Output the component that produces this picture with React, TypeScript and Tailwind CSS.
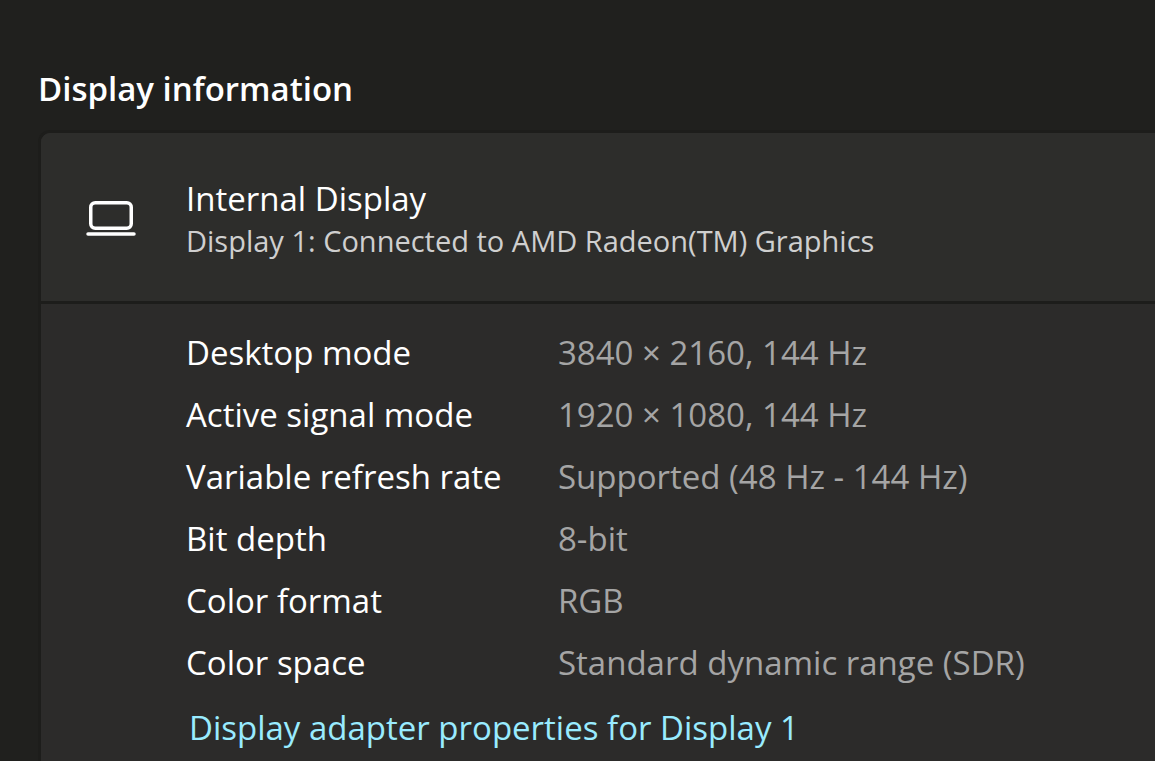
type DisplayDetail = {
  label: string;
  value: string;
};

const details: DisplayDetail[] = [
  { label: "Desktop mode", value: "3840 × 2160, 144 Hz" },
  { label: "Active signal mode", value: "1920 × 1080, 144 Hz" },
  { label: "Variable refresh rate", value: "Supported (48 Hz - 144 Hz)" },
  { label: "Bit depth", value: "8-bit" },
  { label: "Color format", value: "RGB" },
  { label: "Color space", value: "Standard dynamic range (SDR)" },
];

function LaptopIcon() {
  return (
    <svg
      width="50"
      height="36"
      viewBox="0 0 50 36"
      fill="none"
      stroke="currentColor"
      strokeWidth="3.5"
      strokeLinecap="round"
      aria-hidden="true"
    >
      <rect x="4.75" y="2.75" width="40.5" height="25.5" rx="4.5" />
      <path d="M2 34h46" />
    </svg>
  );
}

export default function App() {
  return (
    <main className="min-h-screen bg-[#20201e] pt-[68px] pl-[38px] font-['Open_Sans',sans-serif] text-white">
      <h1 className="text-[33px] leading-[42px] font-semibold">
        Display information
      </h1>

      <section className="mt-5 min-h-[calc(100vh-130px)] overflow-hidden rounded-tl-xl border-t-3 border-l-3 border-[#1d1d1b] bg-[#2c2b2a]">
        <header className="flex items-center border-b-3 border-[#1d1d1b] bg-[#2d2d2b] pt-[42px] pb-10 pl-[45px]">
          <LaptopIcon />
          <div className="ml-[50px] pt-[2px]">
            <h2 className="text-[33px] leading-[44px]">Internal Display</h2>
            <p className="text-[29px] leading-10 text-[#cfcfcf]">
              Display 1: Connected to AMD Radeon(TM) Graphics
            </p>
          </div>
        </header>

        <div className="pt-[18px] pl-[145px]">
          <dl className="text-[33px] leading-[62px]">
            {details.map(({ label, value }) => (
              <div key={label} className="flex whitespace-nowrap">
                <dt className="w-[372px] shrink-0">{label}</dt>
                <dd className="text-[#a5a5a5]">{value}</dd>
              </div>
            ))}
          </dl>
          <a
            href="#adapter-properties"
            className="mt-[3px] ml-[3px] inline-block text-[33px] leading-[62px] text-[#99ebff]"
          >
            Display adapter properties for Display 1
          </a>
        </div>
      </section>
    </main>
  );
}
